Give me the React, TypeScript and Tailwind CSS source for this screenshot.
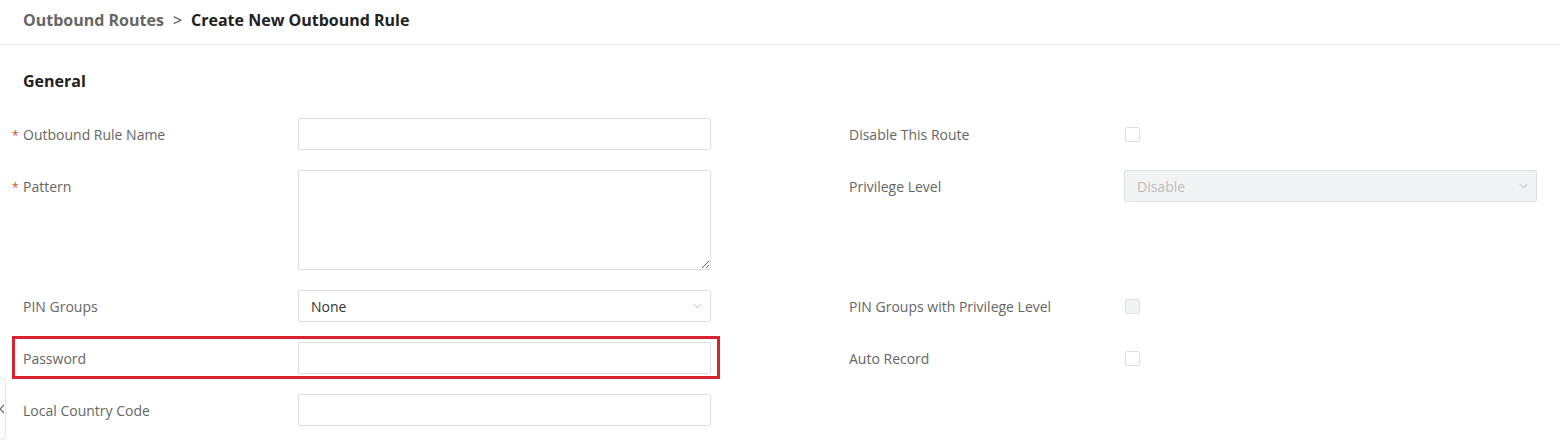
import React from "react";

function Chevron({ className }: { className?: string }) {
    return (
        <svg viewBox="0 0 10 6" className={className} fill="none" stroke="currentColor" strokeWidth="1">
            <path d="M1 1l4 4 4-4" />
        </svg>
    );
}

function Label({ text, required }: { text: string; required?: boolean }) {
    return (
        <div className="relative h-[32px] w-[275px] shrink-0 pt-px text-[14px] leading-[32px] text-[#666]">
            {required && <span className="absolute -left-[11px] top-[2px] text-[12px] text-[#e0482f]">*</span>}
            {text}
        </div>
    );
}

function TextInput() {
    return <input className="h-[32px] w-[413px] rounded-[2px] border border-[#dcdfe6] bg-white px-3 text-[14px] outline-none" />;
}

function Checkbox({ disabled }: { disabled?: boolean }) {
    return (
        <div className="flex h-[32px] items-center pl-px pt-px">
            <span
                className={
                    disabled
                        ? "h-[15px] w-[15px] rounded-[2px] border border-[#dcdfe6] bg-[#f2f3f5]"
                        : "h-[15px] w-[15px] rounded-[2px] border border-[#dcdfe6] bg-white"
                }
            />
        </div>
    );
}

export default function App() {
    return (
        <div className="relative h-[445px] w-full overflow-hidden bg-white font-['Open_Sans',sans-serif]">
            {/* breadcrumb */}
            <div className="flex h-[45px] items-center border-b border-[#ebebeb] pb-[5px] pl-[23px] text-[16px] font-bold">
                <span className="text-[#666]">Outbound Routes</span>
                <span className="mx-[9px] font-semibold text-[#666]">&gt;</span>
                <span className="text-[#222]">Create New Outbound Rule</span>
            </div>

            <div className="pl-[23px] pt-[25px]">
                <h2 className="text-[16px] font-bold leading-[22px] text-[#222]">General</h2>

                <div className="mt-[26px] flex">
                    {/* left column */}
                    <div className="flex w-[826px] flex-col gap-[20px]">
                        <div className="flex">
                            <Label text="Outbound Rule Name" required />
                            <TextInput />
                        </div>
                        <div className="flex">
                            <Label text="Pattern" required />
                            <textarea className="block h-[100px] w-[413px] rounded-[2px] border border-[#dcdfe6] px-3 py-1 text-[14px] outline-none" />
                        </div>
                        <div className="flex">
                            <Label text="PIN Groups" />
                            <div className="flex h-[32px] w-[413px] items-center justify-between rounded-[2px] border border-[#dcdfe6] pl-3 pr-[8px] text-[14px] text-[#333]">
                                <span>None</span>
                                <Chevron className="h-[6px] w-[9px] text-[#aaa]" />
                            </div>
                        </div>
                        <div className="relative flex">
                            <div className="absolute -left-[11px] -top-[6px] h-[43px] w-[708px] border-[3px] border-[#d7232f]" />
                            <Label text="Password" />
                            <TextInput />
                        </div>
                        <div className="flex">
                            <Label text="Local Country Code" />
                            <TextInput />
                        </div>
                    </div>

                    {/* right column */}
                    <div className="flex flex-col gap-[20px]">
                        <div className="flex">
                            <Label text="Disable This Route" />
                            <Checkbox />
                        </div>
                        <div className="flex h-[100px]">
                            <Label text="Privilege Level" />
                            <div className="flex h-[32px] w-[413px] items-center justify-between rounded-[2px] border border-[#dcdfe6] bg-[#f2f3f5] pl-3 pr-[8px] text-[14px] text-[#bbb]">
                                <span>Disable</span>
                                <Chevron className="h-[6px] w-[9px] text-[#aaa]" />
                            </div>
                        </div>
                        <div className="flex">
                            <Label text="PIN Groups with Privilege Level" />
                            <Checkbox disabled />
                        </div>
                        <div className="flex">
                            <Label text="Auto Record" />
                            <Checkbox />
                        </div>
                    </div>
                </div>
            </div>

            {/* collapse tab on the left edge */}
            <div className="absolute left-[-14px] top-[378px] flex h-[62px] w-[20px] items-center justify-end overflow-hidden rounded-[5px] border border-[#e5e5e5] bg-white text-[#666]">
                <svg viewBox="0 0 6 10" className="h-[10px] w-[6px]" fill="none" stroke="currentColor" strokeWidth="1.2">
                    <path d="M5 1L1 5l4 4" />
                </svg>
            </div>
        </div>
    );
}
